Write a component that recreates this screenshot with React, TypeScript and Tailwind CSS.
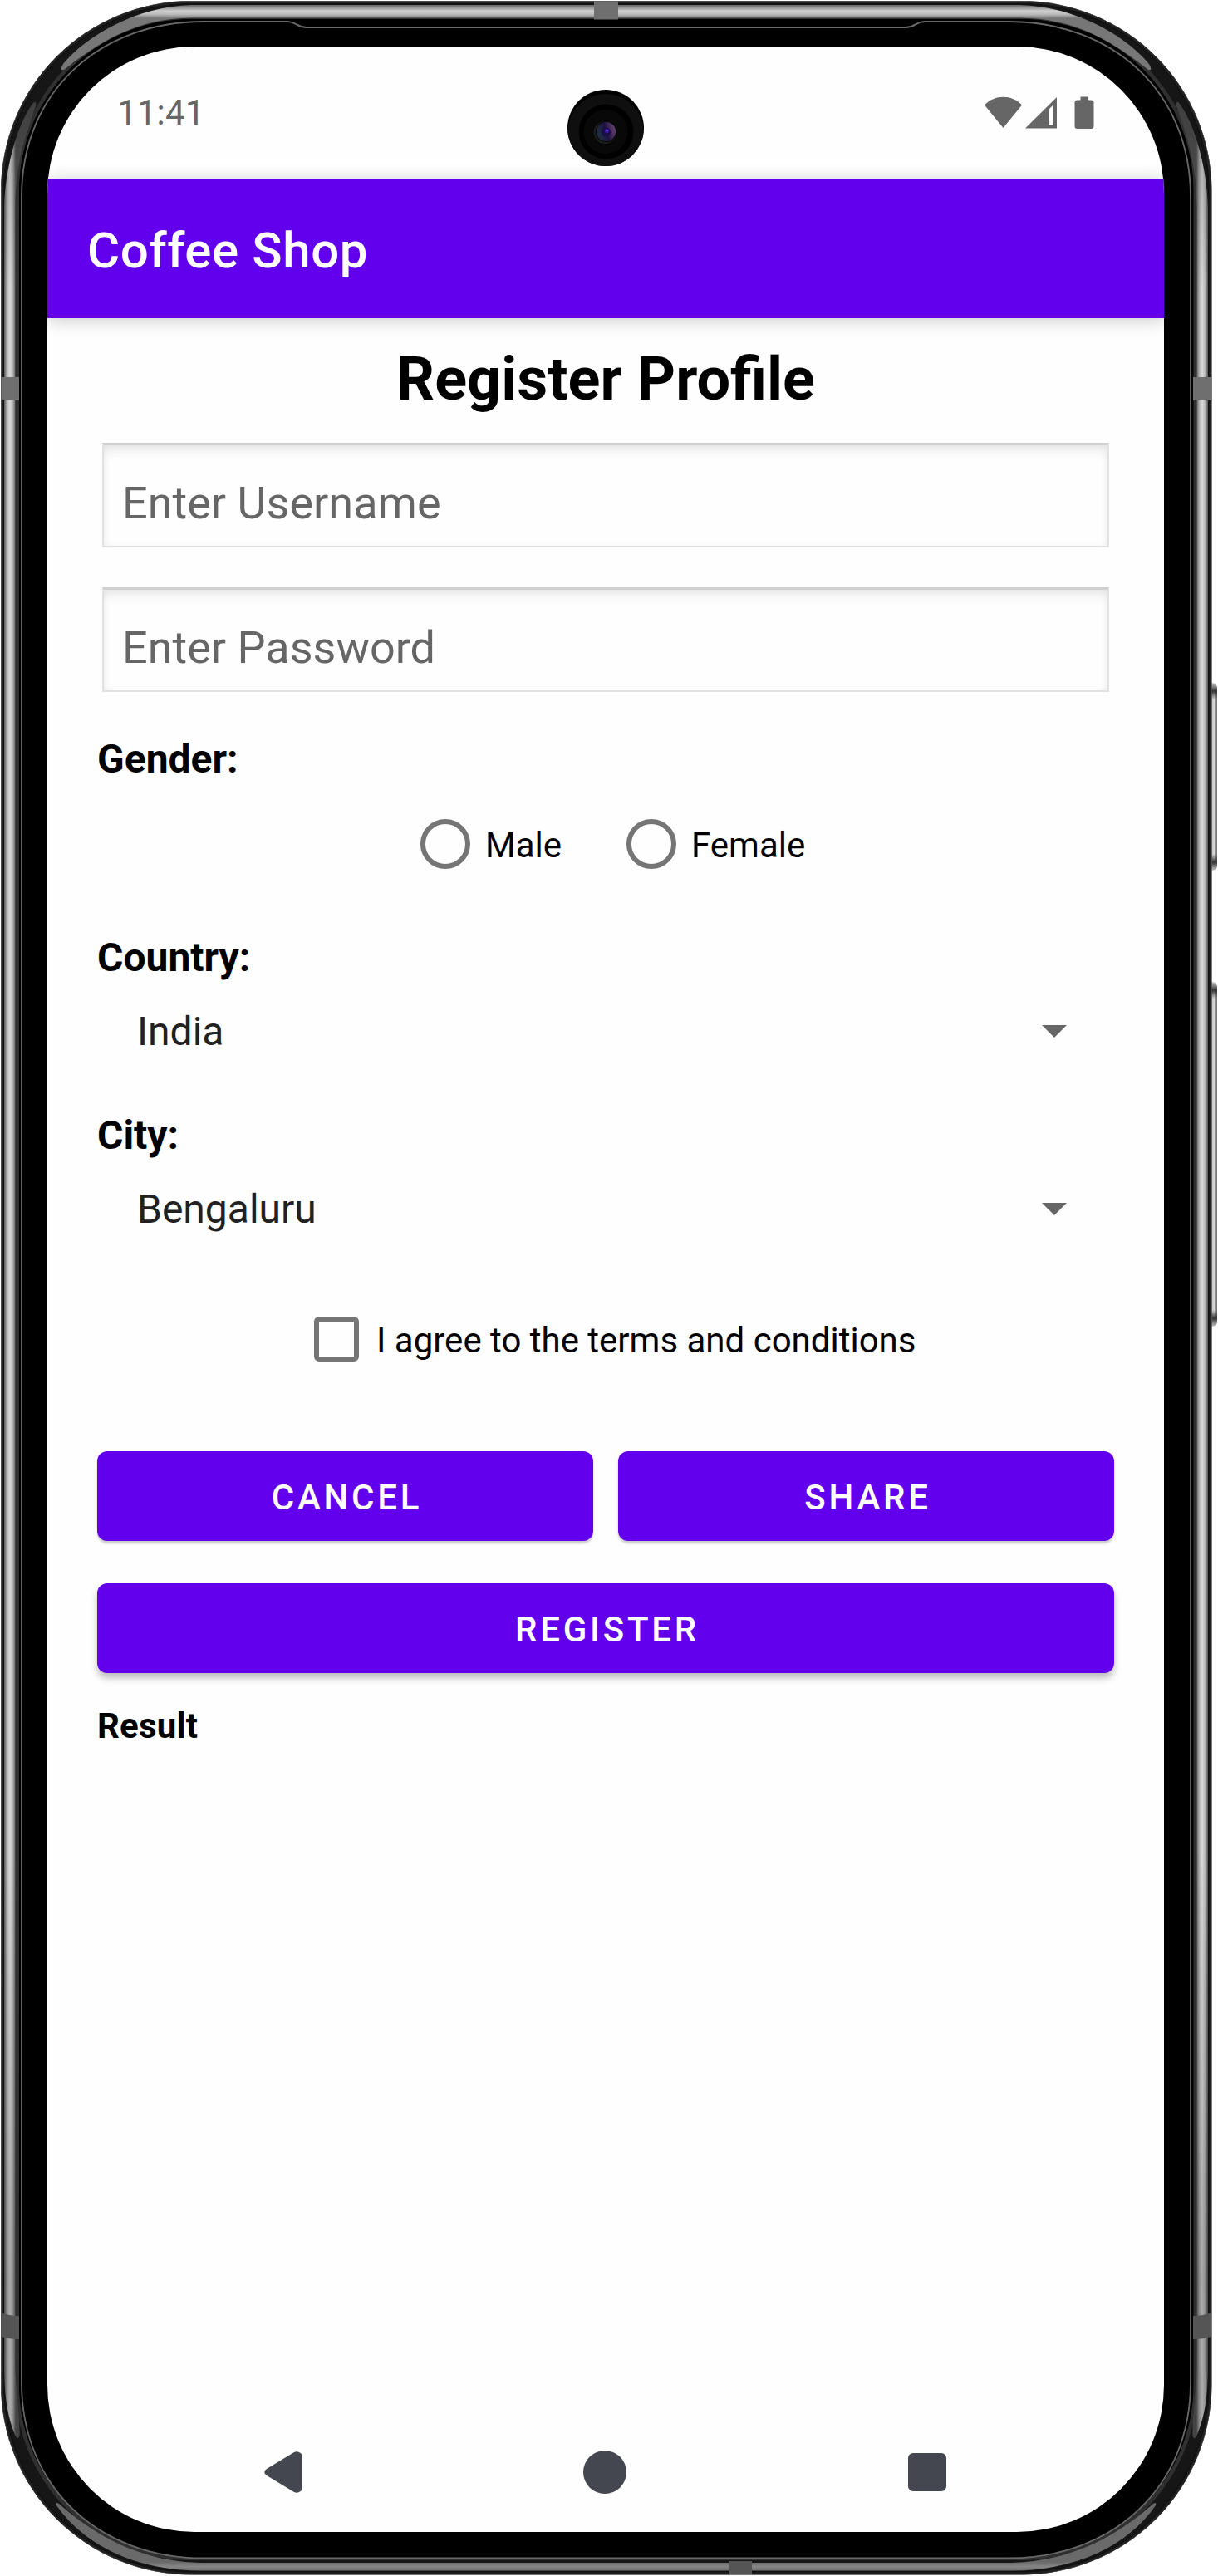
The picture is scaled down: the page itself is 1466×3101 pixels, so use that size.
import React from "react";

function DeviceFrame() {
  const rings: [number, string, number][] = [
    [1, "#777", 1],
    [2.5, "#222", 3],
    [4.5, "#111", 2],
    [12, "#161616", 14],
    [20.5, "#303030", 5],
    [24, "#000", 3],
  ];
  const side =
    "M5 250 C6 205 20 150 40 124 Q44 120 43 128 C30 165 19 195 18.500 250 V2850 C19 2880 24 2910 23.500 2932 Q22 2938 19 2933 C10 2912 5.500 2890 5 2850 Z";
  const top =
    "M230 6 C165 8 105 42 76 77 Q71 86 77 84 C120 50 165 22 230 21.500 H1228 C1294 22 1339 50 1382 84 Q1388 86 1383 77 C1354 42 1294 8 1228 6 Z";
  const bottom =
    "M240 3085 C175 3083 120 3058 71 3014 Q67 3011 68 3016 C100 3062 160 3094 240 3094.500 H1218 C1300 3094 1359 3062 1391 3016 Q1392 3011 1388 3014 C1339 3058 1284 3083 1218 3085 Z";
  return (
    <svg className="absolute inset-0 h-full w-full" viewBox="0 0 1466 3101" fill="none" aria-hidden="true">
      <defs>
        <linearGradient id="sideBand" gradientUnits="userSpaceOnUse" x1="5" x2="19" y1="0" y2="0">
          <stop offset="0" stopColor="#555" />
          <stop offset=".25" stopColor="#b5b5b5" />
          <stop offset=".5" stopColor="#dadada" />
          <stop offset=".75" stopColor="#b0b0b0" />
          <stop offset="1" stopColor="#555" />
        </linearGradient>
        <linearGradient id="sideShade" x1="0" x2="0" y1="0" y2="1">
          <stop offset="0" stopColor="#000" stopOpacity=".25" />
          <stop offset=".08" stopColor="#000" stopOpacity="0" />
          <stop offset=".75" stopColor="#000" stopOpacity="0" />
          <stop offset=".93" stopColor="#000" stopOpacity=".22" />
          <stop offset="1" stopColor="#000" stopOpacity=".2" />
        </linearGradient>
        <linearGradient id="topBand" gradientUnits="userSpaceOnUse" x1="0" x2="0" y1="6" y2="22">
          <stop offset="0" stopColor="#666" />
          <stop offset=".45" stopColor="#cfcfcf" />
          <stop offset=".7" stopColor="#bbb" />
          <stop offset="1" stopColor="#777" />
        </linearGradient>
        <linearGradient id="bottomBand" gradientUnits="userSpaceOnUse" x1="0" x2="0" y1="3084" y2="3095">
          <stop offset="0" stopColor="#6a6a6a" />
          <stop offset=".5" stopColor="#858585" />
          <stop offset="1" stopColor="#707070" />
        </linearGradient>
        <linearGradient id="key" x1="0" x2="1" y1="0" y2="0">
          <stop offset="0" stopColor="#bbb" />
          <stop offset=".55" stopColor="#dcdcdc" />
          <stop offset=".75" stopColor="#333" />
          <stop offset="1" stopColor="#999" />
        </linearGradient>
        <linearGradient id="keyTop" x1="0" x2="0" y1="0" y2="1">
          <stop offset="0" stopColor="#ccc" />
          <stop offset=".5" stopColor="#333" />
          <stop offset="1" stopColor="#333" stopOpacity="0" />
        </linearGradient>
        <linearGradient id="keyBottom" x1="0" x2="0" y1="1" y2="0">
          <stop offset="0" stopColor="#ccc" />
          <stop offset=".5" stopColor="#333" />
          <stop offset="1" stopColor="#333" stopOpacity="0" />
        </linearGradient>
      </defs>
      {[
        [822, 226],
        [1182, 415],
      ].map(([y, h]) => (
        <g key={y}>
          <path d={`M1458 ${y} q7 0 7 8 v${h - 16} q0 8 -7 8 z`} fill="url(#key)" />
          <path d={`M1458 ${y} q7 0 7 8 v12 h-7 z`} fill="url(#keyTop)" />
          <path d={`M1458 ${y + h} q7 0 7 -8 v-12 h-7 z`} fill="url(#keyBottom)" />
        </g>
      ))}
      <rect x="1" y="1" width="1457.500" height="3098.500" rx="229" fill="#000" />
      {rings.map(([i, c, w]) => (
        <rect key={i} x={i + 0.5} y={i + 0.5} width={1458.5 - 2 * i} height={3099.5 - 2 * i} rx={229 - i} stroke={c} strokeWidth={w} />
      ))}
      <path d={side} fill="url(#sideBand)" />
      <path d={side} fill="url(#sideShade)" />
      <g transform="translate(1459 0) scale(-1 1)">
        <path d={side} fill="url(#sideBand)" />
        <path d={side} fill="url(#sideShade)" />
      </g>
      <path d={top} fill="url(#topBand)" />
      <path d={bottom} fill="url(#bottomBand)" />
      <path
        d="M26 237 C26 110 120 26 245 26 H346 C357 26 357 33 369 33 H1090 C1102 33 1102 26 1113 26 H1214 C1339 26 1433 110 1433 237 V2868 C1433 2995 1339 3079.500 1214 3079.500 H245 C120 3079.500 26 2995 26 2868 Z"
        stroke="#686868"
        strokeWidth="1.800"
        fill="#000"
      />
      <g fill="#6f6f6f">
        <path d="M1.500 454 H23 V482 H1.500 Z" />
        <path d="M1436 454 H1458 V482 H1436 Z" />
        <path d="M715 1.500 H744 V23.500 H715 Z" />
      </g>
      <g fill="#555">
        <path d="M1.500 2784 Q10 2788 23 2788 V2816 Q10 2816 1.500 2813 Z" />
        <path d="M1457.500 2784 Q1449 2788 1436 2788 V2816 Q1449 2816 1457.500 2813 Z" />
        <path d="M877 3083 H905 V3099 H877 Z" />
      </g>
    </svg>
  );
}

function Camera() {
  return (
    <svg className="absolute top-[108px] left-[683px] size-[92px]" viewBox="0 0 92 92" aria-hidden="true">
      <defs>
        <linearGradient id="lens" x1="0" x2="1" y1=".6" y2=".3">
          <stop offset="0" stopColor="#213344" />
          <stop offset=".5" stopColor="#1d1240" />
          <stop offset="1" stopColor="#6d4574" />
        </linearGradient>
        <clipPath id="cameraClip">
          <circle cx="46" cy="46" r="46" />
        </clipPath>
      </defs>
      <circle cx="46" cy="46" r="46" fill="#000" />
      <circle cx="46" cy="50.500" r="45.500" fill="#0f0f0f" clipPath="url(#cameraClip)" />
      <circle cx="46.500" cy="50.500" r="33" fill="#000" />
      <circle cx="46" cy="50.500" r="26.500" fill="#080808" />
      <circle cx="45" cy="51.500" r="13.500" fill="#1b1b1b" />
      <circle cx="46.500" cy="50.500" r="12.500" fill="#050508" />
      <circle cx="46.500" cy="50.500" r="11.500" fill="url(#lens)" />
      <circle cx="46.500" cy="51" r="5.500" fill="#170e42" />
      <circle cx="47.500" cy="49.500" r="2.800" fill="#33189a" />
      <circle cx="47.500" cy="49" r="1.100" fill="#8c5cff" />
    </svg>
  );
}

function StatusBar() {
  return (
    <div className="flex h-[159px] shrink-0 items-center justify-between pr-[84px] pl-[84px] text-[#666]">
      <span className="text-[42px] leading-[50px] tracking-[0.2px]">11:41</span>
      <div className="flex items-center fill-current">
        <svg className="h-[40px] w-[45px]" viewBox="0 0 45 40">
          <path d="M0 10.500 C12 -2.500 33 -2.500 45 10.500 L22.500 38 Z" />
        </svg>
        <svg className="ml-[4px] h-[40px] w-[38px]" viewBox="0 0 38 40">
          <path fillRule="evenodd" d="M38 1 V38.500 H0 Z M34 10 L28 16 V35 H34 Z" />
        </svg>
        <svg className="ml-[21px] h-[40px] w-[24px]" viewBox="0 0 24 40">
          <path d="M7.500 .5 H17 V4.500 H20.500 Q23.500 4.500 23.500 7.500 V36 Q23.500 39 20.500 39 H3.500 Q.5 39 .5 36 V7.500 Q.5 4.500 3.500 4.500 H7.500 Z" />
        </svg>
      </div>
    </div>
  );
}

function Field({ label, className }: { label: string; className: string }) {
  return (
    <div
      className={`mx-[6px] flex h-[126px] w-[1212px] items-center border-2 border-t-3 border-[#e2e2e2] border-t-[#d0d0d0] pt-[18px] pl-[22px] text-[54px] text-[#666] shadow-[inset_0_9px_14px_-3px_rgba(0,0,0,0.09),inset_0_0_9px_rgba(0,0,0,0.04)] ${className}`}
    >
      {label}
    </div>
  );
}

function Radio({ label }: { label: string }) {
  return (
    <label className="flex items-center">
      <span className="size-[60px] rounded-full border-6 border-[#757575]" />
      <span className="pt-[3px] pl-[18px] text-[42px] leading-[50px]">{label}</span>
    </label>
  );
}

function Spinner({ title, value, className }: { title: string; value: string; className: string }) {
  return (
    <div className={className}>
      <div className="text-[48px] leading-[56px] font-bold">{title}</div>
      <div className="mt-[31px] flex items-center justify-between pr-[57px] pl-[48px]">
        <span className="pt-[2px] text-[48px] leading-[56px] text-[#212121]">{value}</span>
        <svg className="h-[15px] w-[30px] fill-[#666]" viewBox="0 0 30 15">
          <path d="M0 0 H30 L15 15 Z" />
        </svg>
      </div>
    </div>
  );
}

function Button({ children, className }: { children: React.ReactNode; className: string }) {
  return (
    <button
      className={`flex h-[108px] items-center justify-center rounded-[12px] bg-[#6200ee] pt-[3px] pl-[4px] text-[42px] leading-[50px] font-medium tracking-[3.75px] text-white ${className}`}
    >
      {children}
    </button>
  );
}

export default function App() {
  return (
    <div className="relative h-[3101px] w-[1466px] overflow-hidden bg-white pt-[56px] pl-[57px] font-['Roboto',sans-serif] text-black">
      <DeviceFrame />
      <div className="relative flex h-[2992px] w-[1344px] flex-col overflow-hidden rounded-[177px] bg-[#fefefe]">
        <StatusBar />
        <header className="relative flex h-[168px] shrink-0 items-center bg-[#6200ee] pt-[5px] pl-[48px] text-[60px] font-medium tracking-[0.6px] text-white shadow-[0_3px_20px_rgba(0,0,0,0.2)]">
          Coffee Shop
        </header>
        <main className="flex grow flex-col px-[60px]">
          <h1 className="mt-[32px] text-center text-[72px] leading-[84px] font-bold">Register Profile</h1>
          <Field label="Enter Username" className="mt-[34px]" />
          <Field label="Enter Password" className="mt-[48px]" />
          <div className="mt-[53px] text-[48px] leading-[56px] font-bold">Gender:</div>
          <div className="mt-[44px] flex gap-[78px] pl-[389px]">
            <Radio label="Male" />
            <Radio label="Female" />
          </div>
          <Spinner title="Country:" value="India" className="mt-[79px]" />
          <Spinner title="City:" value="Bengaluru" className="mt-[69px]" />
          <label className="mt-[101px] flex h-[54px] items-center pl-[261px]">
            <span className="size-[54px] rounded-[6px] border-6 border-[#757575]" />
            <span className="pt-[3px] pl-[21px] text-[42px] leading-[50px]">I agree to the terms and conditions</span>
          </label>
          <div className="mt-[108px] flex gap-[30px]">
            <Button className="w-[597px] shadow-[0_3px_3px_rgba(0,0,0,0.2)]">CANCEL</Button>
            <Button className="w-[597px] shadow-[0_3px_3px_rgba(0,0,0,0.2)]">SHARE</Button>
          </div>
          <Button className="mt-[51px] w-full shadow-[0_6px_8px_rgba(0,0,0,0.26)]">REGISTER</Button>
          <div className="mt-[39px] text-[42px] leading-[50px] font-bold tracking-[0.2px]">Result</div>
        </main>
        <nav className="flex h-[144px] shrink-0 items-center pl-[261px] text-[#454750]">
          <svg className="h-[50px] w-[46px] fill-current" viewBox="0 0 46 50">
            <path d="M36 1 Q39 -.5 42 1 Q46 2.500 46 7 V43 Q46 47.500 42 49 Q39 50.500 36 49 L3 29 Q-2.500 25 3 21 Z" />
          </svg>
          <span className="ml-[338px] size-[52px] rounded-full bg-current" />
          <span className="ml-[339px] size-[46px] rounded-[6px] bg-current" />
        </nav>
      </div>
      <Camera />
    </div>
  );
}
